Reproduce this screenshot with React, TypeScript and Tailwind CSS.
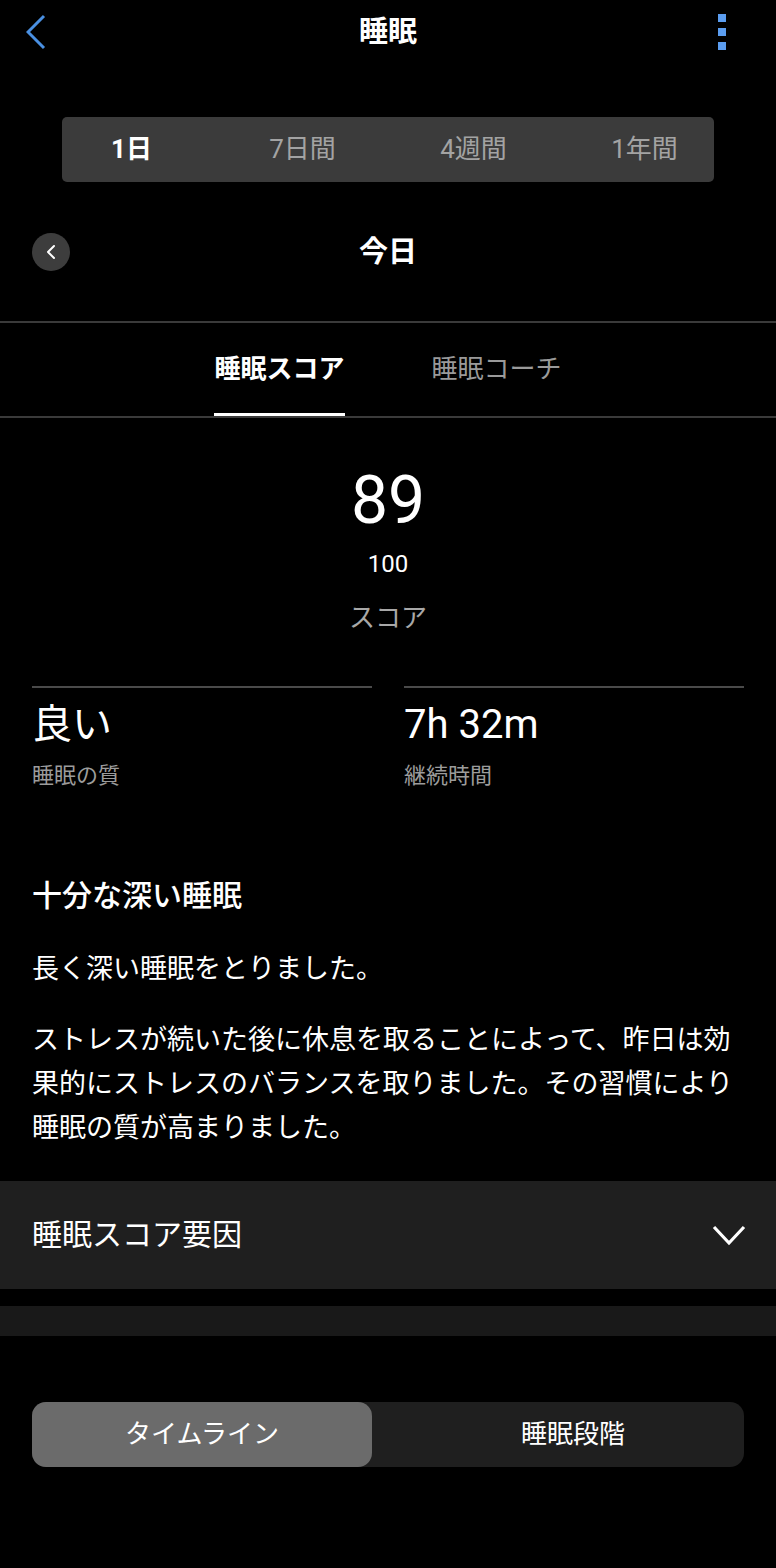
import { ChevronLeft } from "lucide-react";

const FONT = { fontFamily: 'Roboto, "Noto Sans CJK JP", sans-serif' };

const RANGES = ["1日", "7日間", "4週間", "1年間"];

export default function App() {
  return (
    <main className="min-h-[1568px] bg-black text-white" style={FONT}>
      {/* top bar */}
      <header className="grid h-16 grid-cols-[1fr_auto_1fr] items-center px-[26px]">
        <svg width="20" height="36" viewBox="0 0 20 36" className="text-[#4a90e2]">
          <polyline
            points="18,2 2,18 18,34"
            fill="none"
            stroke="currentColor"
            strokeWidth="3"
            strokeLinejoin="miter"
          />
        </svg>
        <h1 className="text-[29px] font-bold leading-none">睡眠</h1>
        <div className="mr-6 flex flex-col items-end gap-[6px]">
          <span className="h-2 w-2 bg-[#5b9df0]" />
          <span className="h-2 w-2 bg-[#5b9df0]" />
          <span className="h-2 w-2 bg-[#5b9df0]" />
        </div>
      </header>

      {/* range selector */}
      <div className="mx-[62px] mt-[53px] h-[65px] rounded-[5px] bg-[#3b3b3b]">
        <div className="-mx-4 grid h-full grid-cols-4 items-center text-center text-[26px]">
          {RANGES.map((r, i) => (
            <span
              key={r}
              className={i === 0 ? "font-bold text-white" : "text-[#a3a3a3]"}
            >
              {r}
            </span>
          ))}
        </div>
      </div>

      {/* day nav */}
      <div className="mt-10 grid h-[60px] grid-cols-[1fr_auto_1fr] items-center px-8">
        <div className="flex h-[38px] w-[38px] items-center justify-center rounded-full bg-[#3d3d3d]">
          <ChevronLeft className="h-6 w-6 text-white" strokeWidth={2} />
        </div>
        <span className="text-[29px] font-bold leading-none">今日</span>
        <div />
      </div>

      {/* tabs */}
      <nav className="mt-[39px] flex justify-center gap-[87px] border-y-2 border-[#3a3a3a]">
        <div className="flex h-[93px] flex-col justify-center border-b-[3px] border-white pt-[3px] text-[26px] font-bold">
          睡眠スコア
        </div>
        <div className="flex h-[93px] flex-col justify-center text-[26px] text-[#9a9a9a]">
          睡眠コーチ
        </div>
      </nav>

      {/* score */}
      <section className="flex flex-col items-center">
        <p className="mt-[50px] text-[66px] font-normal leading-none">89</p>
        <p className="mt-[18px] text-[24px] leading-none">100</p>
        <p className="mt-[29px] text-[26px] leading-none text-[#a8a8a8]">スコア</p>
      </section>

      {/* stats */}
      <section className="mt-[55px] grid grid-cols-2 gap-8 px-8">
        <div className="border-t-2 border-[#4a4a4a]">
          <p className="mt-[17px] text-[40px] leading-none">良い</p>
          <p className="mt-[20px] text-[22px] leading-none text-[#9c9c9c]">睡眠の質</p>
        </div>
        <div className="border-t-2 border-[#4a4a4a]">
          <p className="mt-[17px] text-[40px] leading-none">7h 32m</p>
          <p className="mt-[20px] text-[22px] leading-none text-[#9c9c9c]">継続時間</p>
        </div>
      </section>

      {/* insight */}
      <section className="px-8">
        <h2 className="mt-[94px] text-[30px] font-medium leading-none">十分な深い睡眠</h2>
        <p className="mt-[36px] text-[27px] leading-[44px]">長く深い睡眠をとりました。</p>
        <p className="mt-[27px] text-[27px] leading-[44px]">
          ストレスが続いた後に休息を取ることによって、昨日は効果的にストレスのバランスを取りました。その習慣により睡眠の質が高まりました。
        </p>
      </section>

      {/* factors */}
      <div className="mt-[31px] flex h-[108px] items-center justify-between bg-[#1f1f1f] pl-8 pr-[30px]">
        <span className="text-[30px] leading-none">睡眠スコア要因</span>
        <svg width="34" height="22" viewBox="0 0 34 22" className="text-white">
          <polyline
            points="2,3 17,19 32,3"
            fill="none"
            stroke="currentColor"
            strokeWidth="3.2"
          />
        </svg>
      </div>
      <div className="mt-[17px] h-[30px] bg-[#191919]" />

      {/* view toggle */}
      <div className="mx-8 mt-[66px] flex h-[65px] rounded-[14px] bg-[#1f1f1f] text-[26px]">
        <div className="flex w-[340px] items-center justify-center rounded-[14px] bg-[#6b6b6b]">
          タイムライン
        </div>
        <div className="flex flex-1 items-center justify-center pl-[30px]">睡眠段階</div>
      </div>
    </main>
  );
}
